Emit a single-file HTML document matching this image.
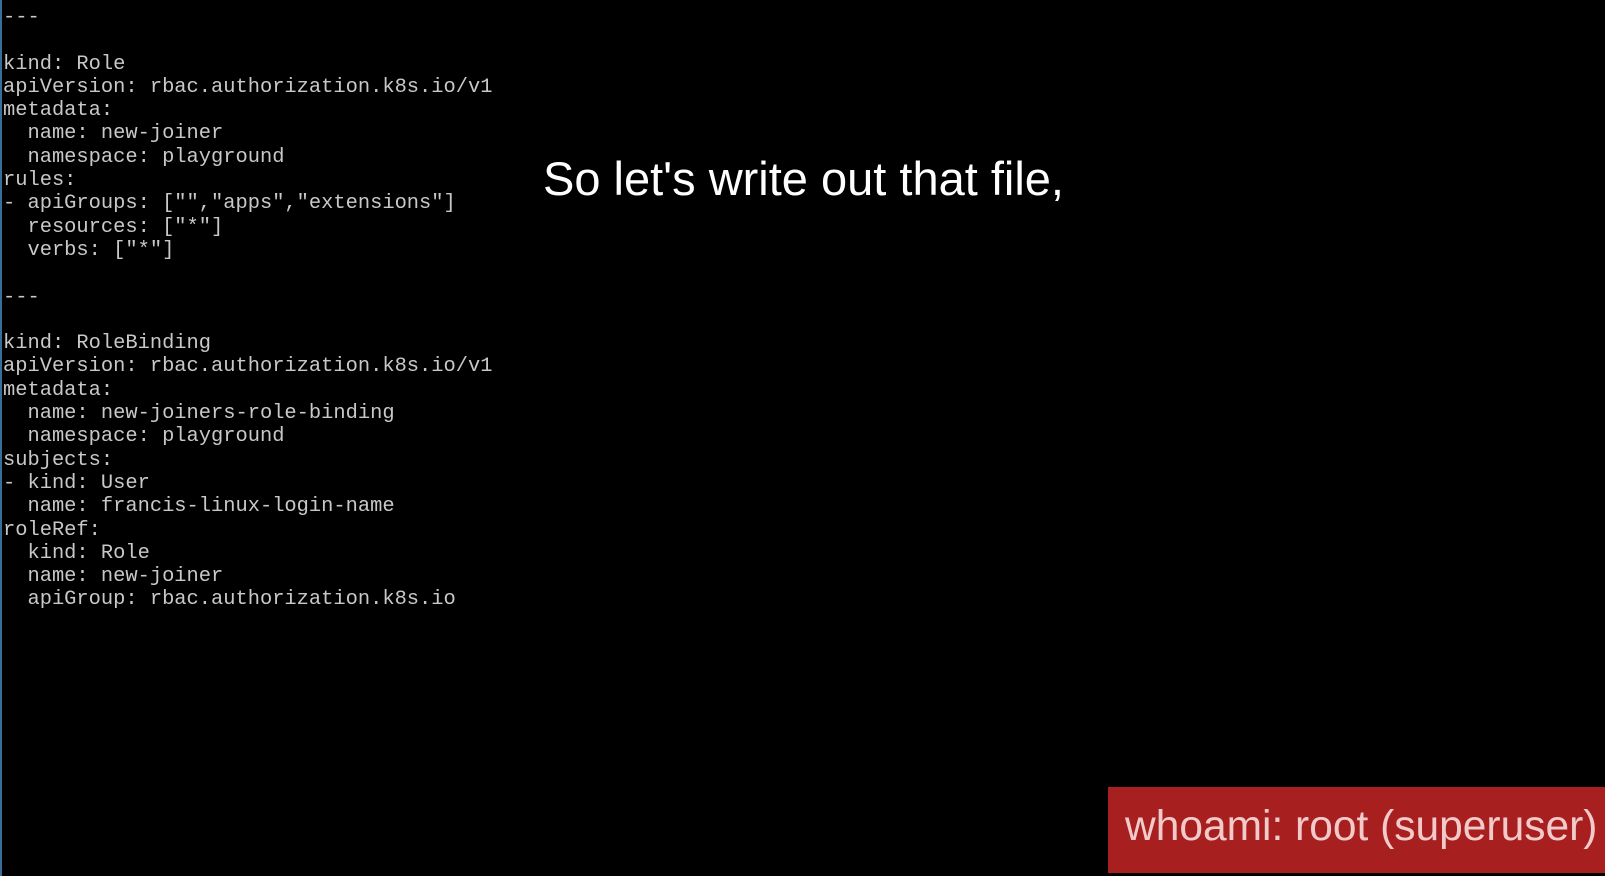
<!DOCTYPE html>
<html><head><style>
html,body{margin:0;padding:0;background:#000;width:1605px;height:876px;overflow:hidden;position:relative}
.bar{position:absolute;left:0;top:0;width:2px;height:876px;background:#3a6e9a}
pre{position:absolute;left:3px;top:6px;margin:0;font-family:"Liberation Mono",monospace;font-size:20.4px;line-height:23.3px;color:#c8c8c8;letter-spacing:0}
.sub{position:absolute;left:543px;top:151px;font-family:"Liberation Sans",sans-serif;font-size:47px;color:#fff;white-space:nowrap}
.red{position:absolute;left:1108px;top:787px;width:497px;height:86px;background:#a81f20}
.red span{position:absolute;left:17px;top:16px;font-family:"Liberation Sans",sans-serif;font-size:42.5px;color:#f2caca;white-space:nowrap;font-weight:300}
</style></head><body>
<div class="bar"></div>
<pre>---

kind: Role
apiVersion: rbac.authorization.k8s.io/v1
metadata:
  name: new-joiner
  namespace: playground
rules:
- apiGroups: ["","apps","extensions"]
  resources: ["*"]
  verbs: ["*"]

---

kind: RoleBinding
apiVersion: rbac.authorization.k8s.io/v1
metadata:
  name: new-joiners-role-binding
  namespace: playground
subjects:
- kind: User
  name: francis-linux-login-name
roleRef:
  kind: Role
  name: new-joiner
  apiGroup: rbac.authorization.k8s.io</pre>
<div class="sub">So let's write out that file,</div>
<div class="red"><span>whoami: root (superuser)</span></div>
</body></html>
